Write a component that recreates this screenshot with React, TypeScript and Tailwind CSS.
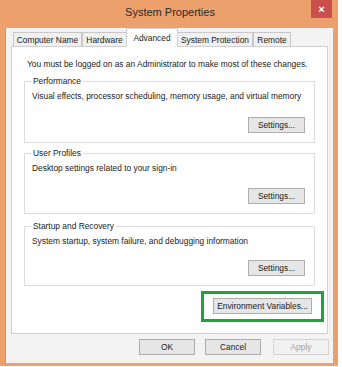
import type { ReactNode } from "react";

const TABS = [
  { label: "Computer Name", w: "w-[69px]" },
  { label: "Hardware", w: "w-[45px]" },
  { label: "Advanced", w: "w-[52px]", active: true },
  { label: "System Protection", w: "w-[76px]" },
  { label: "Remote", w: "w-[38px]" },
];

function Button({ children, className = "", disabled = false }: { children: ReactNode; className?: string; disabled?: boolean }) {
  return (
    <button
      disabled={disabled}
      className={`h-[16px] flex items-center justify-center border leading-none ${
        disabled ? "border-[#d4d4d4] bg-[#f1f1f1] text-[#a3a3a3]" : "border-[#adadad] bg-[#e6e6e6] text-[#1b1b1b]"
      } ${className}`}
    >
      {children}
    </button>
  );
}

function Group({ title, text, className }: { title: string; text: string; className: string }) {
  return (
    <div className={`relative mx-[12px] flex flex-col border border-[#dcdcdc] ${className}`}>
      <span className="absolute -top-[6px] left-[6px] bg-white px-[2px] leading-[11px]">{title}</span>
      <p className="pt-[9px] pl-[7px] leading-[11px]">{text}</p>
      <Button className="mt-auto mr-[9px] mb-[9px] self-end w-[57px]">Settings...</Button>
    </div>
  );
}

export default function App() {
  return (
    <div className="w-[342px] h-[367px] bg-white overflow-hidden font-['Liberation_Sans',sans-serif] text-[8.4px] text-[#1b1b1b]">
      <div className="w-[338px] h-[366px] bg-[#eca06b] flex flex-col">
        <div className="h-[28px] relative flex items-center justify-center">
          <span className="text-[11px] text-[#2a2a2a] -mt-[3px] pl-[2px]">System Properties</span>
          <div className="absolute top-0 right-[6px] w-[21px] h-[18px] bg-[#c9504d] flex items-center justify-center text-white text-[11px] font-bold">
            ×
          </div>
        </div>

        <div className="flex-1 ml-[5px] mr-[5px] mb-[3px] bg-[#f3f3f3] border-l border-[#d98a55] flex flex-col">
          <div className="flex items-end h-[19px] pl-[7px]">
            {TABS.map((t) =>
              t.active ? (
                <div
                  key={t.label}
                  className={`${t.w} h-[19px] -mx-[1px] relative z-10 bg-white border border-b-0 border-[#d0d0d0] flex items-start justify-center pt-[3px]`}
                >
                  {t.label}
                </div>
              ) : (
                <div
                  key={t.label}
                  className={`${t.w} h-[15px] bg-[#f0f0f0] border border-b-0 border-[#c8c8c8] flex items-center justify-center`}
                >
                  {t.label}
                </div>
              ),
            )}
          </div>

          <div className="ml-[5px] mr-[5px] h-[288px] bg-white border border-[#d0d0d0] -mt-[1px] flex flex-col">
            <p className="pt-[12px] pl-[15px] leading-[11px]">
              You must be logged on as an Administrator to make most of these changes.
            </p>
            <Group
              title="Performance"
              text="Visual effects, processor scheduling, memory usage, and virtual memory"
              className="mt-[11px] h-[62px]"
            />
            <Group title="User Profiles" text="Desktop settings related to your sign-in" className="mt-[10px] h-[61px]" />
            <Group
              title="Startup and Recovery"
              text="System startup, system failure, and debugging information"
              className="mt-[12px] h-[60px]"
            />
            <div className="flex justify-end mt-[5px] mr-[3px]">
              <div className="border-[3px] border-[#21a33c] pl-[9px] pr-[9px] pt-[4px] pb-[5px]">
                <Button className="w-[99px]">Environment Variables...</Button>
              </div>
            </div>
          </div>

          <div className="flex justify-end gap-[10px] pr-[4px] mt-[5px]">
            <Button className="w-[56px]">OK</Button>
            <Button className="w-[56px]">Cancel</Button>
            <Button className="w-[56px] ml-[2px]" disabled>
              Apply
            </Button>
          </div>
        </div>
      </div>
    </div>
  );
}
